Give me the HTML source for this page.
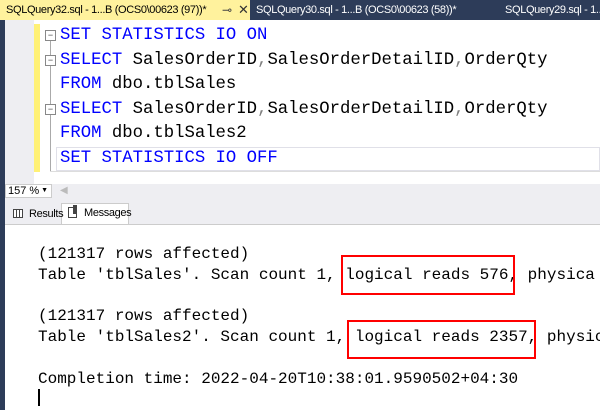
<!DOCTYPE html><html><head><style>
body{margin:0;width:600px;height:410px;overflow:hidden;background:#fff;position:relative;font-family:"Liberation Sans",sans-serif}
.a{position:absolute}
.code{font-family:"Liberation Mono",monospace;font-size:17.3px;white-space:pre;color:#000}
.k{color:#0000ff}.g{color:#808080}
.out{font-family:"Liberation Mono",monospace;font-size:16px;white-space:pre;color:#000}
.box{position:absolute;border:2px solid #ff0000}
.fold{position:absolute;left:45px;width:9px;height:9px;border:1px solid #888;background:#fff;font-size:9px;line-height:8px;text-align:center;color:#444}
.tab{font-size:11px;letter-spacing:-0.35px;white-space:pre}
</style></head><body>
<div class="a" style="left:0;top:0;width:600px;height:20px;background:#2d3c59"></div>
<div class="a" style="left:0;top:0;width:250px;height:20px;background:#fff29d"></div>
<div class="a tab" style="left:6px;top:4px;color:#000">SQLQuery32.sql - 1...B (OCS0\00623 (97))*</div>
<div class="a" style="left:222px;top:3px;font-size:12px;color:#444">⊸</div>
<div class="a" style="left:238px;top:2px;font-size:13px;color:#333">✕</div>
<div class="a tab" style="left:256px;top:4px;color:#fff">SQLQuery30.sql - 1...B (OCS0\00623 (58))*</div>
<div class="a tab" style="left:505px;top:4px;color:#fff">SQLQuery29.sql - 1...</div>
<div class="a" style="left:0;top:20px;width:5px;height:390px;background:#2d3c59"></div>
<div class="a" style="left:5px;top:20px;width:29px;height:164px;background:#eeeef2"></div>
<div class="a" style="left:34px;top:24px;width:6px;height:148px;background:#fff176"></div>
<div class="a" style="left:50px;top:34px;width:1px;height:138px;background:#aaa"></div>
<div class="a" style="left:50px;top:171px;width:550px;height:1px;background:#ddd"></div>
<div class="a" style="left:56px;top:147px;width:544px;height:24px;border:1px solid #e0e0e8;box-sizing:border-box"></div>
<div class="fold" style="top:30px">−</div>
<div class="fold" style="top:55px">−</div>
<div class="fold" style="top:104px">−</div>
<div class="a code" style="left:60px;top:24px;line-height:24.5px"><span class="k">SET STATISTICS IO ON</span>
<span class="k">SELECT</span> SalesOrderID<span class="g">,</span>SalesOrderDetailID<span class="g">,</span>OrderQty
<span class="k">FROM</span> dbo.tblSales
<span class="k">SELECT</span> SalesOrderID<span class="g">,</span>SalesOrderDetailID<span class="g">,</span>OrderQty
<span class="k">FROM</span> dbo.tblSales2
<span class="k">SET STATISTICS IO OFF</span></div>
<div class="a" style="left:5px;top:184px;width:595px;height:40px;background:#eeeef2"></div>
<div class="a" style="left:5px;top:184px;width:47px;height:14px;background:#fff;border:1px solid #ccc;box-sizing:border-box;font-size:11px;line-height:12px;padding-left:2px">157 %<span style="position:absolute;right:3px;font-size:7px">▼</span></div>
<div class="a" style="left:60px;top:185px;color:#bbb;font-size:10px">◀</div>
<div class="a" style="left:61px;top:203px;width:68px;height:21px;background:#fff;border:1px solid #ccc;border-bottom:none;box-sizing:border-box"></div>
<div class="a" style="left:13px;top:209px;width:10px;height:9px;border:1px solid #444;box-sizing:border-box;background:repeating-linear-gradient(90deg,#fff 0 2px,#444 2px 3px)"></div>
<div class="a tab" style="left:29px;top:208px;color:#000">Results</div>
<div class="a" style="left:68px;top:207px;width:9px;height:11px;border:1px solid #444;box-sizing:border-box"></div>
<div class="a" style="left:73px;top:205px;width:4px;height:9px;background:#444"></div>
<div class="a tab" style="left:84px;top:207px;color:#000">Messages</div>
<div class="a" style="left:5px;top:224px;width:595px;height:1px;background:#ccc"></div>
<div class="a" style="left:0;top:225px;width:600px;height:185px;overflow:hidden">
<div class="a out" style="left:38px;top:19px;line-height:20.8px">(121317 rows affected)
Table 'tblSales'. Scan count 1, logical reads 576, physica

(121317 rows affected)
Table 'tblSales2'. Scan count 1, logical reads 2357, physic

Completion time: 2022-04-20T10:38:01.9590502+04:30</div>
</div>
<div class="a" style="left:38px;top:389px;width:2px;height:17px;background:#000"></div>
<div class="box" style="left:341px;top:255px;width:170px;height:36px"></div>
<div class="box" style="left:347px;top:320px;width:185px;height:35px"></div>
</body></html>
